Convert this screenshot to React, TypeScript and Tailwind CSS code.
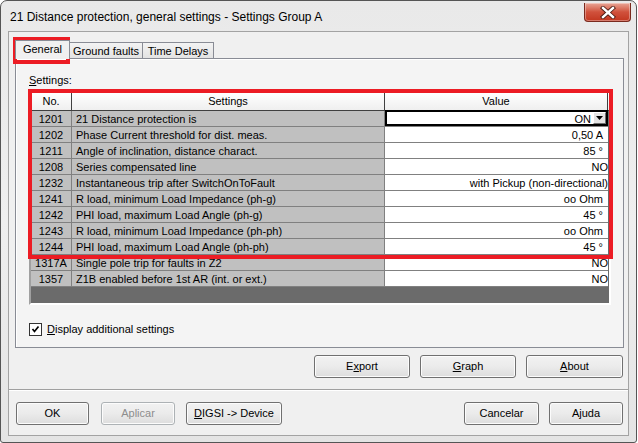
import type { ReactNode } from 'react';

type Row = { no: string; name: string; value: string; tight?: boolean };

const rows: Row[] = [
  { no: '1201', name: '21 Distance protection is', value: 'ON' },
  { no: '1202', name: 'Phase Current threshold for dist. meas.', value: '0,50 A' },
  { no: '1211', name: 'Angle of inclination, distance charact.', value: '85 °' },
  { no: '1208', name: 'Series compensated line', value: 'NO', tight: true },
  { no: '1232', name: 'Instantaneous trip after SwitchOnToFault', value: 'with Pickup (non-directional)', tight: true },
  { no: '1241', name: 'R load, minimum Load Impedance (ph-g)', value: 'oo Ohm' },
  { no: '1242', name: 'PHI load, maximum Load Angle (ph-g)', value: '45 °' },
  { no: '1243', name: 'R load, minimum Load Impedance (ph-ph)', value: 'oo Ohm' },
  { no: '1244', name: 'PHI load, maximum Load Angle (ph-ph)', value: '45 °' },
  { no: '1317A', name: 'Single pole trip for faults in Z2', value: 'NO', tight: true },
  { no: '1357', name: 'Z1B enabled before 1st AR (int. or ext.)', value: 'NO', tight: true },
];

const ui = "font-['Liberation_Sans',Arial,sans-serif] text-[11px] text-black";

function WinButton({ children, w, disabled }: { children: ReactNode; w: string; disabled?: boolean }) {
  return (
    <div
      className={`${w} h-[23px] flex items-center justify-center rounded-[3px] border ${
        disabled ? 'border-[#adb2b5] text-[#8d8d8d]' : 'border-[#707070] text-black'
      } bg-gradient-to-b from-[#f2f2f2] via-[#ebebeb] to-[#dddddd] shadow-[inset_0_0_0_1px_#fcfcfc]`}
    >
      <span className="leading-[13px]">{children}</span>
    </div>
  );
}

function CloseButton() {
  return (
    <div className="ml-auto mr-[5px] mt-[2px] w-[47px] h-[19px] rounded-b-[4px] border border-[#7a2a1e] border-t-0 bg-gradient-to-b from-[#e8a596] via-[#d0513c] to-[#c2361f] flex items-center justify-center shadow-[inset_0_0_0_1px_rgba(255,255,255,0.35)]">
      <svg width="16" height="13" viewBox="0 0 16 13">
        <path d="M3 2 L13 11 M13 2 L3 11" stroke="#4a1a12" strokeWidth="4.2" strokeLinecap="square" />
        <path d="M3 2 L13 11 M13 2 L3 11" stroke="#ffffff" strokeWidth="2.4" strokeLinecap="square" />
      </svg>
    </div>
  );
}

function Tab({ label, selected, w }: { label: string; selected?: boolean; w: string }) {
  return (
    <div
      className={`${w} flex items-center justify-center border border-b-0 border-[#898c95] ${
        selected ? 'h-[19px] relative z-10 -mb-px bg-[#f0f0f0]' : 'h-[16px] -ml-px bg-gradient-to-b from-[#f3f3f3] to-[#e3e3e3]'
      }`}
    >
      <span className={selected ? 'pb-[2px]' : 'pt-[1px]'}>{label}</span>
    </div>
  );
}

function Grid() {
  return (
    <div className="relative ml-[13px] mt-[4px] w-[582px] h-[214px] border-2 border-t-[#a0a0a0] border-l-[#a0a0a0] border-r-white border-b-white bg-[#6b6b6b]">
      <div className="flex h-[18px] border-b border-[#404040] bg-gradient-to-b from-[#ffffff] to-[#efefef]">
        <div className="w-[41px] border-r border-[#404040] flex items-center justify-center">No.</div>
        <div className="w-[313px] border-r border-[#404040] flex items-center justify-center">Settings</div>
        <div className="w-[223px] border-r border-[#404040] flex items-center justify-center">Value</div>
      </div>
      {rows.map((r, i) => (
        <div key={r.no} className="flex h-[16px] w-[577px] border-b border-[#808080] leading-[13px]">
          <div className="w-[41px] shrink-0 border-r border-[#808080] bg-[#c0c0c0] pt-[2px] text-center whitespace-nowrap overflow-hidden">
            {r.no}
          </div>
          <div className="w-[313px] shrink-0 border-r border-[#808080] bg-[#c0c0c0] pt-[2px] pl-[4px] whitespace-nowrap overflow-hidden">
            {r.name}
          </div>
          {i === 0 ? (
            <div className="w-[223px] shrink-0 bg-white border-2 border-black -mt-px flex items-start justify-end">
              <span className="pr-[1px] pt-px">{r.value}</span>
              <div className="ml-[1px] w-[13px] h-[12px] bg-[#e3e3e3] border border-t-white border-l-white border-r-[#6d6d6d] border-b-[#6d6d6d] flex items-center justify-center">
                <svg width="7" height="4" viewBox="0 0 7 4">
                  <path d="M0 0 H7 L3.5 4 Z" fill="#000" />
                </svg>
              </div>
            </div>
          ) : (
            <div
              className={`w-[223px] shrink-0 bg-white pt-[2px] text-right whitespace-nowrap overflow-hidden ${
                r.tight ? 'pr-0' : 'pr-[5px]'
              }`}
            >
              {r.value}
            </div>
          )}
        </div>
      ))}
      <div className="absolute left-[-3px] top-[-4px] w-[585px] h-[170px] border-[4px] border-[#ec1c24] pointer-events-none" />
    </div>
  );
}

export default function App() {
  return (
    <div className={`w-[638px] h-[443px] bg-white overflow-hidden ${ui}`}>
      <div className="w-[637px] h-[443px] border border-[#555555] rounded-t-[7px] rounded-b-[3px] bg-gradient-to-b from-[#e9e9e9] via-[#efefef] to-[#e4e4e4] flex flex-col">
        <div className="h-[30px] flex items-start shrink-0">
          <span className="pl-[9px] pt-[9px] text-[12px] leading-[15px] text-black">
            21 Distance protection, general settings - Settings Group A
          </span>
          <CloseButton />
        </div>

        <div className="mx-[7px] h-[405px] border border-[#a3a3a3] bg-[#f0f0f0] flex flex-col">
          <div className="pl-[6px] pt-[8px]">
            <div className="relative flex items-end h-[18px]">
              <Tab label="General" selected w="w-[55px]" />
              <Tab label="Ground faults" w="w-[74px]" />
              <Tab label="Time Delays" w="w-[72px]" />
              <div className="absolute left-[-2px] top-[-3px] w-[57px] h-[27px] border-[4px] border-[#ec1c24]" />
            </div>
            <div className="w-[609px] h-[290px] border border-[#898c95] bg-[#f4f4f4] shadow-[inset_1px_1px_0_#ffffff]">
              <div className="pl-[13px] pt-[14px] leading-[14px]">
                <span className="underline">S</span>ettings:
              </div>
              <Grid />
              <div className="ml-[13px] mt-[16px] flex items-center gap-[5px]">
                <div className="w-[13px] h-[13px] border border-[#333333] bg-white flex items-center justify-center">
                  <svg width="9" height="9" viewBox="0 0 9 9">
                    <path d="M1.5 4 L3.5 6.5 L7.5 1.5" stroke="#000" strokeWidth="1.7" fill="none" />
                  </svg>
                </div>
                <span>
                  <span className="underline">D</span>isplay additional settings
                </span>
              </div>
            </div>
          </div>

          <div className="mt-[7px] pr-[5px] flex justify-end gap-[10px]">
            <WinButton w="w-[96px]">
              E<span className="underline">x</span>port
            </WinButton>
            <WinButton w="w-[96px]">
              <span className="underline">G</span>raph
            </WinButton>
            <WinButton w="w-[97px]">
              <span className="underline">A</span>bout
            </WinButton>
          </div>

          <div className="mt-[11px] border-t border-[#a0a0a0] border-b border-b-white" />

          <div className="mt-[11px] pl-[7px] pr-[5px] flex">
            <WinButton w="w-[73px]">OK</WinButton>
            <div className="ml-[12px]">
              <WinButton w="w-[74px]" disabled>
                Aplicar
              </WinButton>
            </div>
            <div className="ml-[11px]">
              <WinButton w="w-[96px]">
                <span className="underline">D</span>IGSI -&gt; Device
              </WinButton>
            </div>
            <div className="ml-auto">
              <WinButton w="w-[75px]">Cancelar</WinButton>
            </div>
            <div className="ml-[10px]">
              <WinButton w="w-[74px]">Ajuda</WinButton>
            </div>
          </div>
        </div>
      </div>
    </div>
  );
}
